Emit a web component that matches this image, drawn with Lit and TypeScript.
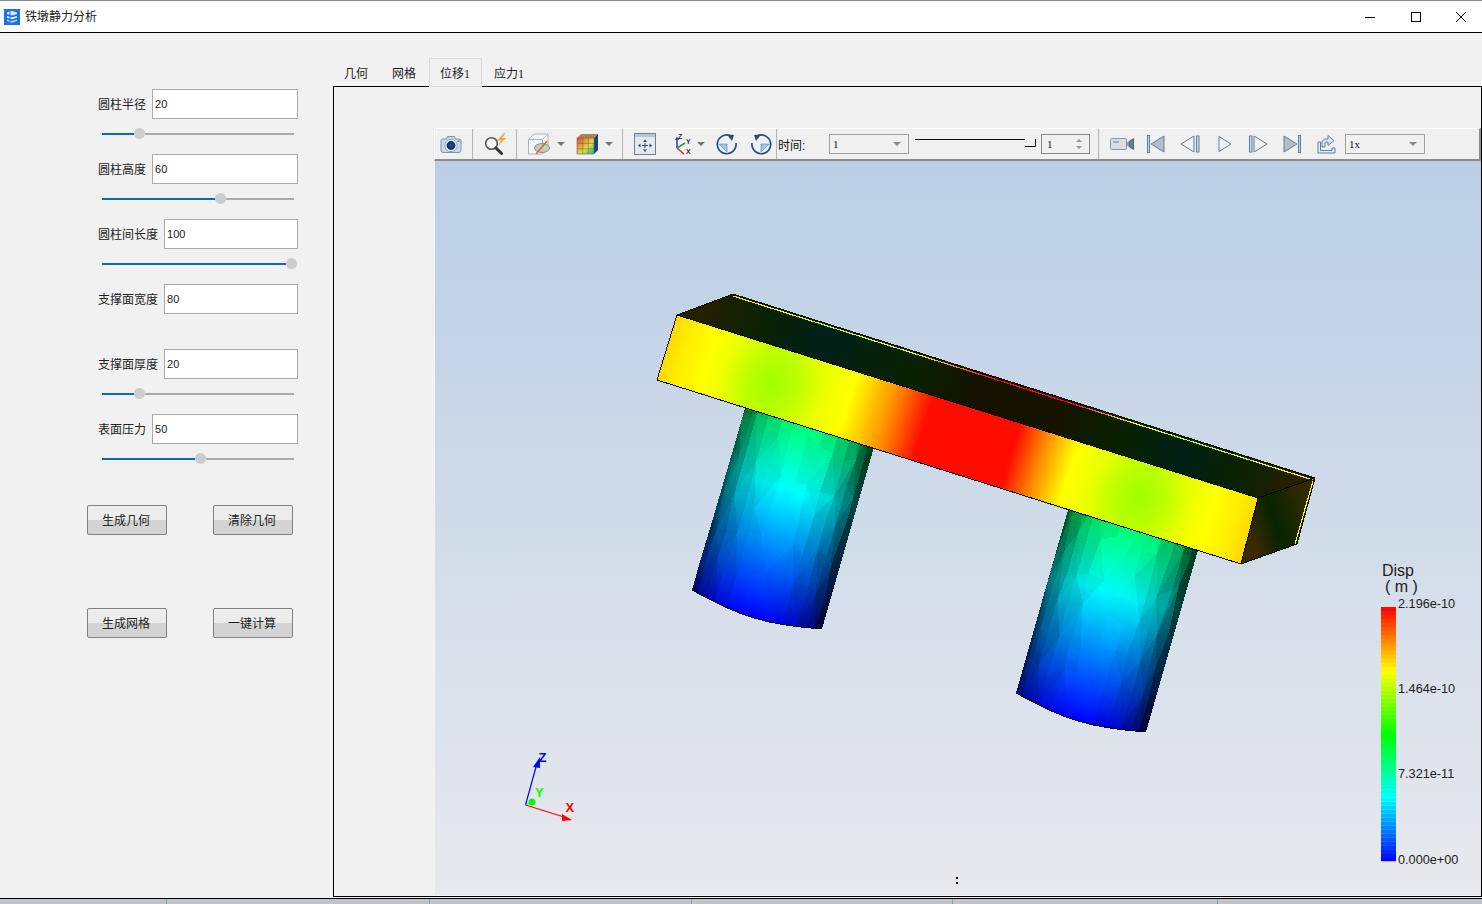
import { LitElement, html, svg, css } from 'lit';

const FORM = [
  { label: '圆柱半径', value: '20', thumb: 37 },
  { label: '圆柱高度', value: '60', thumb: 118 },
  { label: '圆柱间长度', value: '100', thumb: 189 },
  { label: '支撑面宽度', value: '80', thumb: -1 },
  { label: '支撑面厚度', value: '20', thumb: 37 },
  { label: '表面压力', value: '50', thumb: 98 },
];

type Pt = [number, number];

// standard rainbow lookup, 0 = blue, 1 = red
function jet(s: number): number[] {
  if (s < 0.25) return [0, 4 * s, 1];
  if (s < 0.5) return [0, 1, 1 - (s - 0.25) * 4];
  if (s < 0.75) return [(s - 0.5) * 4, 1, 0];
  return [1, 1 - (s - 0.75) * 4, 0];
}

function rnd(n: number) {
  const x = Math.sin(n * 127.1 + 311.7) * 43758.5453;
  return x - Math.floor(x);
}

// faceted cylinder: corners are top-left, top-right, bottom-left, bottom-right.
// The colour itself is smooth (a gradient), only the lighting is per facet.
function cylinder(tl: Pt, tr: Pt, bl: Pt, br: Pt, seed: number) {
  const cols = 14;
  const rows = 6;
  const pts: Pt[][] = [];
  const uv: Pt[][] = [];
  for (let r = 0; r <= rows; r++) {
    pts.push([]);
    uv.push([]);
    for (let c = 0; c <= cols; c++) {
      const th = (Math.PI * c) / cols;
      let u = (1 - Math.cos(th)) / 2;
      let v = r / rows;
      if (r > 0 && r < rows && c > 0 && c < cols) {
        u += (rnd(seed + r * 31 + c) - 0.5) * 0.03;
        v += (rnd(seed + r * 17 + c * 5) - 0.5) * 0.09;
      }
      const tx = tl[0] + (tr[0] - tl[0]) * u;
      const ty = tl[1] + (tr[1] - tl[1]) * u;
      const bx = bl[0] + (br[0] - bl[0]) * u;
      const by = bl[1] + (br[1] - bl[1]) * u;
      const bow = Math.sin(Math.PI * u) * 9 * v;
      pts[r].push([tx + (bx - tx) * v - bow * 0.28, ty + (by - ty) * v + bow * 0.96]);
      uv[r].push([u, v]);
    }
  }
  const tris: { p: string; o: number }[] = [];
  const add = (a: number[], b: number[], d: number[]) => {
    const corners = [a, b, d];
    const u = corners.reduce((t, k) => t + uv[k[0]][k[1]][0], 0) / 3;
    const v = corners.reduce((t, k) => t + uv[k[0]][k[1]][1], 0) / 3;
    const b0 = 0.25 + 0.75 * Math.pow(Math.sin(Math.PI * Math.min(1, u * 1.05)), 0.55);
    const shade = Math.min(1, b0 + (rnd(seed + u * 90 + v * 70) - 0.5) * 0.06);
    tris.push({
      p: corners.map((k) => pts[k[0]][k[1]].join(',')).join(' '),
      o: +(1 - shade).toFixed(3),
    });
  };
  for (let r = 0; r < rows; r++) {
    for (let c = 0; c < cols; c++) {
      if ((r + c) % 2) {
        add([r, c], [r, c + 1], [r + 1, c]);
        add([r, c + 1], [r + 1, c + 1], [r + 1, c]);
      } else {
        add([r, c], [r, c + 1], [r + 1, c + 1]);
        add([r, c], [r + 1, c + 1], [r + 1, c]);
      }
    }
  }
  const edge: Pt[] = pts[rows];
  const outline = [...pts[0], ...[...edge].reverse()].map((p) => p.join(',')).join(' ');
  return { tris, edge, outline };
}

const CYL_A = cylinder([752, 385], [880, 426], [692, 590], [822, 629], 3);
const CYL_B = cylinder([1074, 489], [1204, 529], [1016, 693], [1146, 732], 29);

const BANDS = Array.from({ length: 64 }, (_, i) => {
  const col = jet((i + 0.5) / 64).map((x) => Math.round(x * 255));
  return { y: 861 - ((i + 1) * 254) / 64, c: `rgb(${col.join(',')})` };
});

const beamStops = svg`
  <stop offset="0" stop-color="#ffd800" />
  <stop offset="0.03" stop-color="#ffee00" />
  <stop offset="0.07" stop-color="#ffff00" />
  <stop offset="0.18" stop-color="#c8ff00" />
  <stop offset="0.31" stop-color="#ffff00" />
  <stop offset="0.38" stop-color="#ff9000" />
  <stop offset="0.44" stop-color="#ff0c00" />
  <stop offset="0.59" stop-color="#ff0c00" />
  <stop offset="0.64" stop-color="#ff9000" />
  <stop offset="0.69" stop-color="#ffff00" />
  <stop offset="0.81" stop-color="#c8ff00" />
  <stop offset="0.93" stop-color="#ffff00" />
  <stop offset="0.97" stop-color="#ffee00" />
  <stop offset="1" stop-color="#ffd800" />
`;

const cylStops = svg`
  <stop offset="0" stop-color="#00ff48" />
  <stop offset="0.4" stop-color="#00ffff" />
  <stop offset="1" stop-color="#0000ff" />
`;

const scene = svg`
  <defs>
    <linearGradient id="sky" gradientUnits="userSpaceOnUse" x1="0" y1="161" x2="0" y2="895">
      <stop offset="0" stop-color="#bacee5" />
      <stop offset="1" stop-color="#e7e9ed" />
    </linearGradient>
    <linearGradient id="cylA" gradientUnits="userSpaceOnUse" x1="816" y1="405" x2="754" y2="618">${cylStops}</linearGradient>
    <linearGradient id="cylB" gradientUnits="userSpaceOnUse" x1="1139" y1="509" x2="1078" y2="721">${cylStops}</linearGradient>
    <linearGradient id="front" gradientUnits="userSpaceOnUse" x1="667" y1="347" x2="1250" y2="530">${beamStops}</linearGradient>
    <linearGradient id="back" gradientUnits="userSpaceOnUse" x1="733" y1="294" x2="1315" y2="478">${beamStops}</linearGradient>
    <radialGradient id="spotA" gradientUnits="userSpaceOnUse" cx="772" cy="385" r="52">
      <stop offset="0" stop-color="#a2ff00" />
      <stop offset="1" stop-color="#a2ff00" stop-opacity="0" />
    </radialGradient>
    <radialGradient id="spotB" gradientUnits="userSpaceOnUse" cx="1140" cy="498" r="52">
      <stop offset="0" stop-color="#a2ff00" />
      <stop offset="1" stop-color="#a2ff00" stop-opacity="0" />
    </radialGradient>
    <linearGradient id="top" gradientUnits="userSpaceOnUse" x1="705" y1="305" x2="1287" y2="488">
      <stop offset="0" stop-color="#261f00" />
      <stop offset="0.04" stop-color="#182000" />
      <stop offset="0.1" stop-color="#0a2200" />
      <stop offset="0.2" stop-color="#00201a" />
      <stop offset="0.36" stop-color="#082200" />
      <stop offset="0.48" stop-color="#161100" />
      <stop offset="0.6" stop-color="#161300" />
      <stop offset="0.72" stop-color="#082200" />
      <stop offset="0.82" stop-color="#002014" />
      <stop offset="0.92" stop-color="#0a2200" />
      <stop offset="0.97" stop-color="#182000" />
      <stop offset="1" stop-color="#261f00" />
    </linearGradient>
    <linearGradient id="side" gradientUnits="userSpaceOnUse" x1="1249" y1="530" x2="1306" y2="511">
      <stop offset="0" stop-color="#3a2a00" />
      <stop offset="0.45" stop-color="#062400" />
      <stop offset="1" stop-color="#302800" />
    </linearGradient>
  </defs>
  <rect x="435" y="161" width="1046" height="734" fill="url(#sky)" />

  <g shape-rendering="crispEdges">
    ${[
      { cyl: CYL_A, fill: 'url(#cylA)' },
      { cyl: CYL_B, fill: 'url(#cylB)' },
    ].map(
      ({ cyl, fill }) => svg`
        <polygon points=${cyl.outline} fill=${fill} />
        ${cyl.tris.map((t) => svg`<polygon points=${t.p} fill="#000" fill-opacity=${t.o} />`)}
        <polyline points=${cyl.edge.map((p) => p.join(',')).join(' ')} fill="none" stroke="#000" />
      `,
    )}
    <polygon points="677,315 733,294 1315,478 1258,498" fill="url(#top)" />
    <polygon points="1258,498 1315,478 1297,544 1241,564" fill="url(#side)" />
    <polygon points="677,315 657,380 1241,564 1258,498" fill="url(#front)" />
    <polygon points="677,315 657,380 1241,564 1258,498" fill="url(#spotA)" />
    <polygon points="677,315 657,380 1241,564 1258,498" fill="url(#spotB)" stroke="#000" />
    <line x1="733" y1="296" x2="1313" y2="480" stroke="url(#back)" stroke-width="1.2" />
    <line x1="1313" y1="481" x2="1295" y2="544" stroke="#ffff00" stroke-width="1.2" />
    <polyline points="677,315 733,294 1315,478 1297,544 1241,564" fill="none" stroke="#000" />
    <line x1="1258" y1="498" x2="1315" y2="478" stroke="#000" />
  </g>

  <g font-family="Liberation Sans, Arial, sans-serif" font-weight="700" font-size="13">
    <line x1="525.5" y1="805" x2="536" y2="767" stroke="#0000ff" stroke-width="1.2" />
    <polygon points="540,757 533,767 540,768" fill="#0000ff" />
    <text x="538.5" y="762" fill="#0000ff">Z</text>
    <line x1="525.5" y1="805" x2="564" y2="817" stroke="#ff0000" stroke-width="1.2" />
    <polygon points="572,820 562,814 562,821" fill="#ff0000" />
    <text x="565.5" y="812" fill="#ff0000">X</text>
    <line x1="525.5" y1="805" x2="532" y2="802" stroke="#00ff00" stroke-width="1.2" />
    <circle cx="532" cy="802" r="3.5" fill="#00ff00" />
    <text x="535" y="797" fill="#00ff00">Y</text>
  </g>

  ${BANDS.map((b) => svg`<rect x="1381" y=${b.y} width="15" height="4.2" fill=${b.c} />`)}
  <g font-family="Liberation Sans, Arial, sans-serif" fill="#222">
    <text x="1382" y="576" font-size="16">Disp</text>
    <text x="1385" y="592" font-size="16">( m )</text>
    <text x="1398" y="608" font-size="12.7">2.196e-10</text>
    <text x="1398" y="693" font-size="12.7">1.464e-10</text>
    <text x="1398" y="778" font-size="12.7">7.321e-11</text>
    <text x="1398" y="864" font-size="12.7">0.000e+00</text>
  </g>
  <rect x="956" y="877" width="2" height="2" fill="#000" />
  <rect x="956" y="882" width="2" height="2" fill="#000" />
`;

const arrowDown = html`<svg width="8" height="20" viewBox="0 0 8 20"><path d="M0 8h8l-4 4z" fill="#777" /></svg>`;

const icon = {
  logo: html`<svg width="16" height="16" viewBox="0 0 16 16">
    <rect width="16" height="16" fill="#1b74e4" />
    <path d="M3 3.5l5-1.5 5 1.5v1.5l-5 1.5-5-1.5z" fill="#dcebff" />
    <path d="M3 7l5 1.5L13 7v1.6L8 10.2 3 8.6z" fill="#fff" />
    <path d="M3 10.4l5 1.6 5-1.6V12l-5 1.8L3 12z" fill="#b9d6fb" />
    <path d="M6 3v10" stroke="#1b74e4" />
  </svg>`,
  camera: html`<svg width="22" height="19" viewBox="0 0 22 19">
    <path d="M1 6a2 2 0 012-2h3.5l1-2.5h7l1 2.5H19a2 2 0 012 2v9.5a2 2 0 01-2 2H3a2 2 0 01-2-2z" fill="#c9d8e7" stroke="#7f96b0" />
    <circle cx="11" cy="10.5" r="6.2" fill="#eaf0f6" stroke="#8fa6c0" />
    <circle cx="11" cy="10.5" r="4.4" fill="#12305e" />
    <circle cx="11" cy="10.5" r="2.4" fill="#1f4a8a" />
    <rect x="17.5" y="5.5" width="2" height="1.5" fill="#5f7ea3" />
  </svg>`,
  zoom: html`<svg width="23" height="22" viewBox="0 0 23 22">
    <circle cx="7.5" cy="10.5" r="5.8" fill="#f6f8fa" stroke="#555" stroke-width="1.6" />
    <path d="M12 15l5.5 5.5" stroke="#333" stroke-width="3" stroke-linecap="round" />
    <path d="M20 0l-7 7.5h4l-3 5.5 8-8h-4l3.5-5z" fill="#f0a43c" />
  </svg>`,
  box: html`<svg width="24" height="24" viewBox="0 0 24 24">
    <path d="M1.5 7.5L7 2h14v14l-5.5 6h-14z" fill="#f5f6f8" stroke="#a9b4c0" />
    <path d="M1.5 7.5h14v14.5M15.5 7.5L21 2" fill="none" stroke="#a9b4c0" />
    <ellipse cx="15" cy="16" rx="7.5" ry="4.5" fill="#c5c9b8" stroke="#8d9299" />
    <path d="M9 22L20 9" stroke="#d9662f" stroke-width="1.4" />
  </svg>`,
  cube: html`<svg width="22" height="22" viewBox="0 0 22 22">
    <defs>
      <linearGradient id="cubeFace" x1="0" y1="0" x2="1" y2="1">
        <stop offset="0" stop-color="#e8433a" />
        <stop offset="0.35" stop-color="#f0a02f" />
        <stop offset="0.6" stop-color="#dfe03f" />
        <stop offset="0.85" stop-color="#5ec85c" />
        <stop offset="1" stop-color="#35aec8" />
      </linearGradient>
    </defs>
    <path d="M1 5l4-4h17l-4 4z" fill="#a9883f" />
    <path d="M18 5l4-4v16l-4 4z" fill="#1d3f83" />
    <rect x="1" y="5" width="17" height="16" fill="url(#cubeFace)" />
    <path d="M6.7 5v16M12.3 5v16M1 10.4h17M1 15.8h17" stroke="#6d6d5c" stroke-width="0.6" />
    <path d="M1 5h17v16H1z" fill="none" stroke="#5d6470" stroke-width="0.6" />
  </svg>`,
  fit: html`<svg width="22" height="22" viewBox="0 0 22 22">
    <rect x="0.5" y="0.5" width="21" height="21" fill="#e4e9ef" stroke="#6f8097" />
    <rect x="1" y="1" width="20" height="3" fill="#b7c5d4" />
    <path d="M11 6.5l2 2.5H9zM11 19l2-2.5H9zM4 12.5l2.5-2v4zM18 12.5l-2.5-2v4z" fill="#2b4c75" />
    <path d="M8 12.5h6M11 10v5" stroke="#2b4c75" />
  </svg>`,
  axes: html`<svg width="21" height="24" viewBox="0 0 21 24">
    <path d="M6 16V7" stroke="#1f3fbf" stroke-width="1.5" />
    <path d="M6 16l8-5" stroke="#1b9a4a" stroke-width="1.5" />
    <path d="M6 16l7 6" stroke="#e02828" stroke-width="1.5" />
    <path d="M6 4.5l2 3.5H4z" fill="#1f3fbf" />
    <text x="7" y="7" font-family="Liberation Sans, sans-serif" font-size="7" font-weight="700" fill="#333">Z</text>
    <text x="15" y="12" font-family="Liberation Sans, sans-serif" font-size="7" font-weight="700" fill="#333">Y</text>
    <text x="15" y="22" font-family="Liberation Sans, sans-serif" font-size="7" font-weight="700" fill="#333">X</text>
  </svg>`,
  rotR: html`<svg width="22" height="22" viewBox="0 0 22 22">
    <path d="M13.5 2.4A9.4 9.4 0 1020 10" fill="none" stroke="#2b4c75" stroke-width="1.7" />
    <path d="M11 1.5l7 .5-2 6z" fill="#2b4c75" />
    <path d="M3 11h8v8z" fill="#9cc7ee" stroke="#3f7fc0" stroke-width="0.6" />
  </svg>`,
  rotL: html`<svg width="22" height="22" viewBox="0 0 22 22">
    <path d="M8.5 2.4A9.4 9.4 0 112 10" fill="none" stroke="#2b4c75" stroke-width="1.7" />
    <path d="M11 1.5L4 2l2 6z" fill="#2b4c75" />
    <path d="M19 11h-8v8z" fill="#9cc7ee" stroke="#3f7fc0" stroke-width="0.6" />
  </svg>`,
  video: html`<svg width="24" height="14" viewBox="0 0 24 14">
    <rect x="0.5" y="1.5" width="16" height="11" rx="1" fill="#dadde1" stroke="#8a97a6" />
    <rect x="3" y="4" width="6" height="2" fill="#a4acb6" />
    <path d="M17 5l2-1v6l-2-1z" fill="#8d9bad" />
    <path d="M19.5 4l4-2.5v11l-4-2.5z" fill="#5d7fa6" stroke="#2f4d73" stroke-width="0.7" />
  </svg>`,
  first: html`<svg width="18" height="18" viewBox="0 0 18 18">
    <rect x="0.5" y="0.5" width="2" height="17" fill="#c8d0da" stroke="#5f7ea3" />
    <path d="M17 1v16L4 9z" fill="#b4bcc6" stroke="#5f7ea3" />
  </svg>`,
  prev: html`<svg width="20" height="18" viewBox="0 0 20 18">
    <path d="M14 1v16L1 9z" fill="#eef1f4" stroke="#5f7ea3" />
    <rect x="16.5" y="1" width="2.5" height="16" fill="#d5dbe2" stroke="#5f7ea3" />
  </svg>`,
  play: html`<svg width="14" height="18" viewBox="0 0 14 18">
    <path d="M1 1.5v15L13 9z" fill="#eef1f4" stroke="#5f7ea3" />
  </svg>`,
  next: html`<svg width="19" height="18" viewBox="0 0 19 18">
    <rect x="0.5" y="1" width="2.5" height="16" fill="#d5dbe2" stroke="#5f7ea3" />
    <path d="M5 1v16L18 9z" fill="#eef1f4" stroke="#5f7ea3" />
  </svg>`,
  last: html`<svg width="18" height="18" viewBox="0 0 18 18">
    <path d="M1 1v16L14 9z" fill="#b4bcc6" stroke="#5f7ea3" />
    <rect x="15.5" y="0.5" width="2" height="17" fill="#c8d0da" stroke="#5f7ea3" />
  </svg>`,
  share: html`<svg width="19" height="20" viewBox="0 0 19 20">
    <path d="M1 8h2.5v8.5H15V14h3v5H1z" fill="#e8edf3" stroke="#5f7ea3" />
    <path d="M5 13V8.5C5 6 7 5 9.5 5H11V1.5L17 6.5l-6 5V8H9.5C8.2 8 8 9 8 10v3z" fill="#dbe4ee" stroke="#5f7ea3" />
  </svg>`,
};

export class AppRoot extends LitElement {
  static styles = css`
    :host {
      display: block;
      width: 1482px;
      height: 904px;
      overflow: hidden;
      background: #f1f1f1;
      color: #222;
      font: 12px "Liberation Sans", "Noto Sans CJK SC", sans-serif;
    }
    .window {
      display: flex;
      flex-direction: column;
      height: 904px;
    }
    .titlebar {
      display: flex;
      align-items: center;
      height: 33px;
      box-sizing: border-box;
      padding: 0 0 0 4px;
      background: #fff;
      border-top: 1px solid #8a8a8a;
      border-bottom: 1px solid #000;
    }
    .title {
      margin-left: 5px;
      padding-bottom: 2px;
      flex: 1;
    }
    .winbtn {
      display: flex;
      align-items: center;
      justify-content: center;
      width: 45.5px;
      height: 31px;
      flex: none;
    }
    .winbtn:last-child {
      margin-right: -2px;
    }
    .body {
      display: flex;
      height: 866px;
      border-bottom: 1px solid #000;
      box-sizing: border-box;
      flex: none;
    }
    .taskbar {
      flex: 1;
      display: grid;
      grid-template-columns: 167px 263px 262px 261px 265px 1fr;
      background: #bcc5ce;
    }
    .taskbar i {
      border-right: 1px solid #7aa0c8;
    }

    .side {
      width: 333px;
      flex: none;
      padding-top: 56px;
      box-sizing: border-box;
    }
    .row {
      display: flex;
      align-items: center;
      gap: 6px;
      height: 30px;
      padding: 0 35px 0 98px;
    }
    .row span {
      padding-bottom: 2px;
    }
    .row input {
      flex: 1;
      min-width: 0;
      height: 30px;
      box-sizing: border-box;
      border: 1px solid #aaa;
      padding: 0 0 0 2px;
      margin: 0;
      outline: none;
      background: #fff;
      color: #222;
      font: 11px "Liberation Sans", sans-serif;
    }
    .slot {
      height: 35px;
      padding: 9px 0 0 102px;
      box-sizing: border-box;
    }
    .slider {
      display: flex;
      align-items: center;
      width: 192px;
      height: 11px;
    }
    .fill {
      height: 2px;
      flex: none;
      background: #0a69bd;
    }
    .knob {
      width: 11px;
      height: 11px;
      flex: none;
      border-radius: 50%;
      background: #cdcdcd;
    }
    .rest {
      flex: 1;
      height: 2px;
      background: #aaa;
    }
    .btns {
      display: flex;
      gap: 46px;
      padding-left: 87px;
      margin-top: 26px;
    }
    .btns + .btns {
      margin-top: 73px;
    }
    .btns button {
      width: 80px;
      height: 30px;
      padding: 0 2px 2px 0;
      border: 1px solid #808080;
      border-radius: 2px;
      color: #222;
      background: linear-gradient(#ececec 50%, #d3d3d3 50%);
      font: inherit;
    }

    .main {
      flex: 1;
      display: flex;
      flex-direction: column;
      padding-top: 25px;
      min-width: 0;
    }
    .tabs {
      display: flex;
      height: 28px;
    }
    .tab {
      display: flex;
      align-items: center;
      padding: 1px 13px 0 11px;
      box-sizing: border-box;
      font: 12px "Liberation Serif", "Noto Sans CJK SC", serif;
    }
    .tab.on {
      height: 29px;
      padding-left: 11px;
      padding-right: 12px;
      margin-right: 1px;
      box-shadow: inset 0 0 0 1px #d9d9d9;
      background: #f1f1f1;
      position: relative;
      z-index: 1;
    }
    .pane {
      height: 811px;
      box-sizing: border-box;
      border: 1px solid #000;
      padding: 41px 0 0 101px;
      background: #f1f1f1;
    }
    .toolbar {
      display: flex;
      align-items: center;
      height: 33px;
      box-sizing: border-box;
      padding-left: 5px;
      background: #f0f0f0;
      border-top: 1px solid #fff;
      border-left: 1px solid #fff;
      margin-left: -1px;
      border-bottom: 2px solid #8c8c8c;
      border-right: 2px solid #8c8c8c;
    }
    .toolbar svg {
      flex: none;
      display: block;
    }
    .sep {
      width: 1px;
      height: 30px;
      flex: none;
      background: #b4b4b4;
    }
    .tool-label {
      width: 51px;
      flex: none;
      color: #111;
      font-size: 12px;
    }
    .combo,
    .spin {
      display: flex;
      align-items: center;
      height: 20px;
      box-sizing: border-box;
      flex: none;
      border: 1px solid #a0a0a0;
      padding: 0 7px 0 3px;
      font: 11px "Liberation Serif", serif;
      color: #111;
    }
    .combo {
      width: 80px;
    }
    .combo span,
    .spin span {
      flex: 1;
    }
    .spin {
      width: 49px;
      border-color: #888;
      padding-left: 5px;
    }
    .m1 { margin-left: 1px; }
    .m4 { margin-left: 4px; }
    .m5 { margin-left: 5px; }
    .m6 { margin-left: 6px; }
    .m7 { margin-left: 7px; }
    .m8 { margin-left: 8px; }
    .m9 { margin-left: 9px; }
    .m10 { margin-left: 10px; }
    .m11 { margin-left: 11px; }
    .m12 { margin-left: 12px; }
    .m13 { margin-left: 13px; }
    .m15 { margin-left: 15px; }
    .m16 { margin-left: 16px; }
    .m17 { margin-left: 17px; }
    .m18 { margin-left: 18px; }
    .wrap {
      flex: none;
      display: block;
    }
    .scene {
      display: block;
      width: 1046px;
      height: 734px;
    }
  `;

  _row(r: { label: string; value: string; thumb: number }) {
    return html`
      <div class="row"><span>${r.label}</span><input .value=${r.value} /></div>
      <div class="slot">
        ${r.thumb < 0
          ? ''
          : html`<div class="slider">
              <div class="fill" style="width:${r.thumb - 5.5}px"></div>
              <div class="knob"></div>
              <div class="rest"></div>
            </div>`}
      </div>
    `;
  }

  _toolbar() {
    return html`
      <div class="toolbar">
        ${icon.camera}
        <div class="sep m10"></div>
        <span class="wrap m11">${icon.zoom}</span>
        <div class="sep m9"></div>
        <span class="wrap m10">${icon.box}</span>
        <span class="wrap m6">${arrowDown}</span>
        <span class="wrap m11">${icon.cube}</span>
        <span class="wrap m7">${arrowDown}</span>
        <div class="sep m9"></div>
        <span class="wrap m11">${icon.fit}</span>
        <span class="wrap m15">${icon.axes}</span>
        <span class="wrap m5">${arrowDown}</span>
        <span class="wrap m11">${icon.rotR}</span>
        <span class="wrap m12">${icon.rotL}</span>
        <div class="sep m4"></div>
        <span class="tool-label m1">时间:</span>
        <div class="combo"><span>1</span><svg width="8" height="6" viewBox="0 0 8 6"><path d="M0 1h8L4 5z" fill="#888" /></svg></div>
        <svg class="m6" width="121" height="14" viewBox="0 0 121 14">
          <path d="M0 2.5h110M120.5 2v7.5H110" fill="none" stroke="#111" />
        </svg>
        <div class="spin m5">
          <span>1</span>
          <svg width="6" height="12" viewBox="0 0 6 12"><path d="M0 4l3-3 3 3zM0 8h6l-3 3z" fill="#999" /></svg>
        </div>
        <div class="sep m8"></div>
        <span class="wrap m11">${icon.video}</span>
        <span class="wrap m13">${icon.first}</span>
        <span class="wrap m15">${icon.prev}</span>
        <span class="wrap m18">${icon.play}</span>
        <span class="wrap m17">${icon.next}</span>
        <span class="wrap m15">${icon.last}</span>
        <span class="wrap m16">${icon.share}</span>
        <div class="combo m9"><span>1x</span><svg width="8" height="6" viewBox="0 0 8 6"><path d="M0 1h8L4 5z" fill="#888" /></svg></div>
      </div>
    `;
  }

  render() {
    return html`
      <div class="window">
        <div class="titlebar">
          ${icon.logo}
          <span class="title">铁墩静力分析</span>
          <div class="winbtn">
            <svg width="10" height="10" viewBox="0 0 10 10"><path d="M0 5.5h10" stroke="#000" /></svg>
          </div>
          <div class="winbtn">
            <svg width="10" height="10" viewBox="0 0 10 10"><rect x="0.5" y="0.5" width="9" height="9" fill="none" stroke="#000" /></svg>
          </div>
          <div class="winbtn">
            <svg width="10" height="10" viewBox="0 0 10 10"><path d="M0 0l10 10M10 0L0 10" stroke="#000" /></svg>
          </div>
        </div>
        <div class="body">
          <div class="side">
            ${FORM.map((r) => this._row(r))}
            <div class="btns"><button>生成几何</button><button>清除几何</button></div>
            <div class="btns"><button>生成网格</button><button>一键计算</button></div>
          </div>
          <div class="main">
            <div class="tabs">
              <div class="tab">几何</div>
              <div class="tab">网格</div>
              <div class="tab on">位移1</div>
              <div class="tab">应力1</div>
            </div>
            <div class="pane">
              ${this._toolbar()}
              <svg class="scene" viewBox="435 161 1046 734">${scene}</svg>
            </div>
          </div>
        </div>
        <div class="taskbar"><i></i><i></i><i></i><i></i><i></i></div>
      </div>
    `;
  }
}
customElements.define('app-root', AppRoot);
